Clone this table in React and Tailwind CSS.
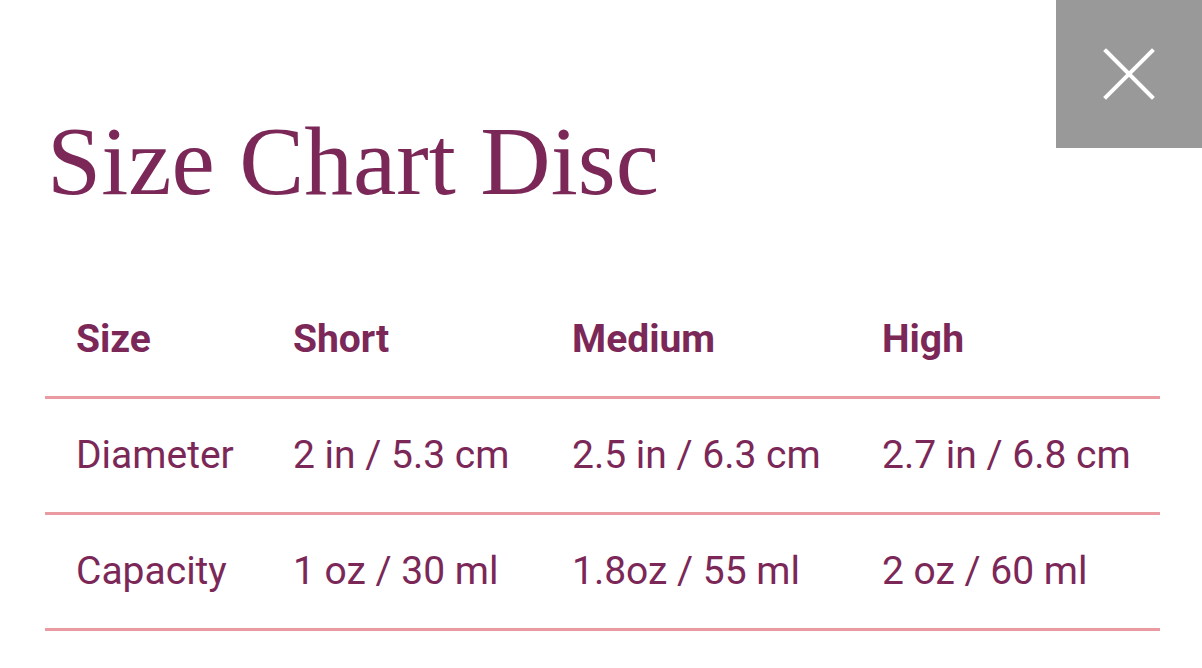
import React from 'react';

const rows = [
  ['Diameter', '2 in / 5.3 cm', '2.5 in / 6.3 cm', '2.7 in / 6.8 cm'],
  ['Capacity', '1 oz / 30 ml', '1.8oz / 55 ml', '2 oz / 60 ml'],
];

const cols = 'grid grid-cols-[217px_279px_310px_309px]';

const App = () => {
  return (
    <div className="relative w-[1202px] h-[668px] bg-white overflow-hidden">
      {/* Close button */}
      <button className="absolute top-0 right-0 w-[146px] h-[148px] bg-[#999999] flex items-center justify-center">
        <svg width="52" height="52" viewBox="0 0 52 52" fill="none" stroke="white" strokeWidth="4" strokeLinecap="square">
          <path d="M3 3 L49 49 M49 3 L3 49" />
        </svg>
      </button>

      <div className="pl-[45px]">
        <h1 className="pt-[113px] pl-[2px] text-[97.5px] leading-none text-[#7b2858] font-['Liberation_Serif',serif]">
          Size Chart Disc
        </h1>

        <div className="mt-[72px] w-[1115px] font-['Roboto',sans-serif] text-[39px] text-[#7b2858]">
          <div className={`${cols} h-[116px] items-center border-b-[3px] border-[#ea9aa1] font-bold`}>
            <div className="pl-[31px]">Size</div>
            <div className="pl-[31px]">Short</div>
            <div className="pl-[31px]">Medium</div>
            <div className="pl-[31px]">High</div>
          </div>
          {rows.map((r) => (
            <div key={r[0]} className={`${cols} h-[116px] items-center border-b-[3px] border-[#ea9aa1]`}>
              {r.map((c) => (
                <div key={c} className="pl-[31px] whitespace-nowrap">{c}</div>
              ))}
            </div>
          ))}
        </div>
      </div>
    </div>
  );
};

export default App;
